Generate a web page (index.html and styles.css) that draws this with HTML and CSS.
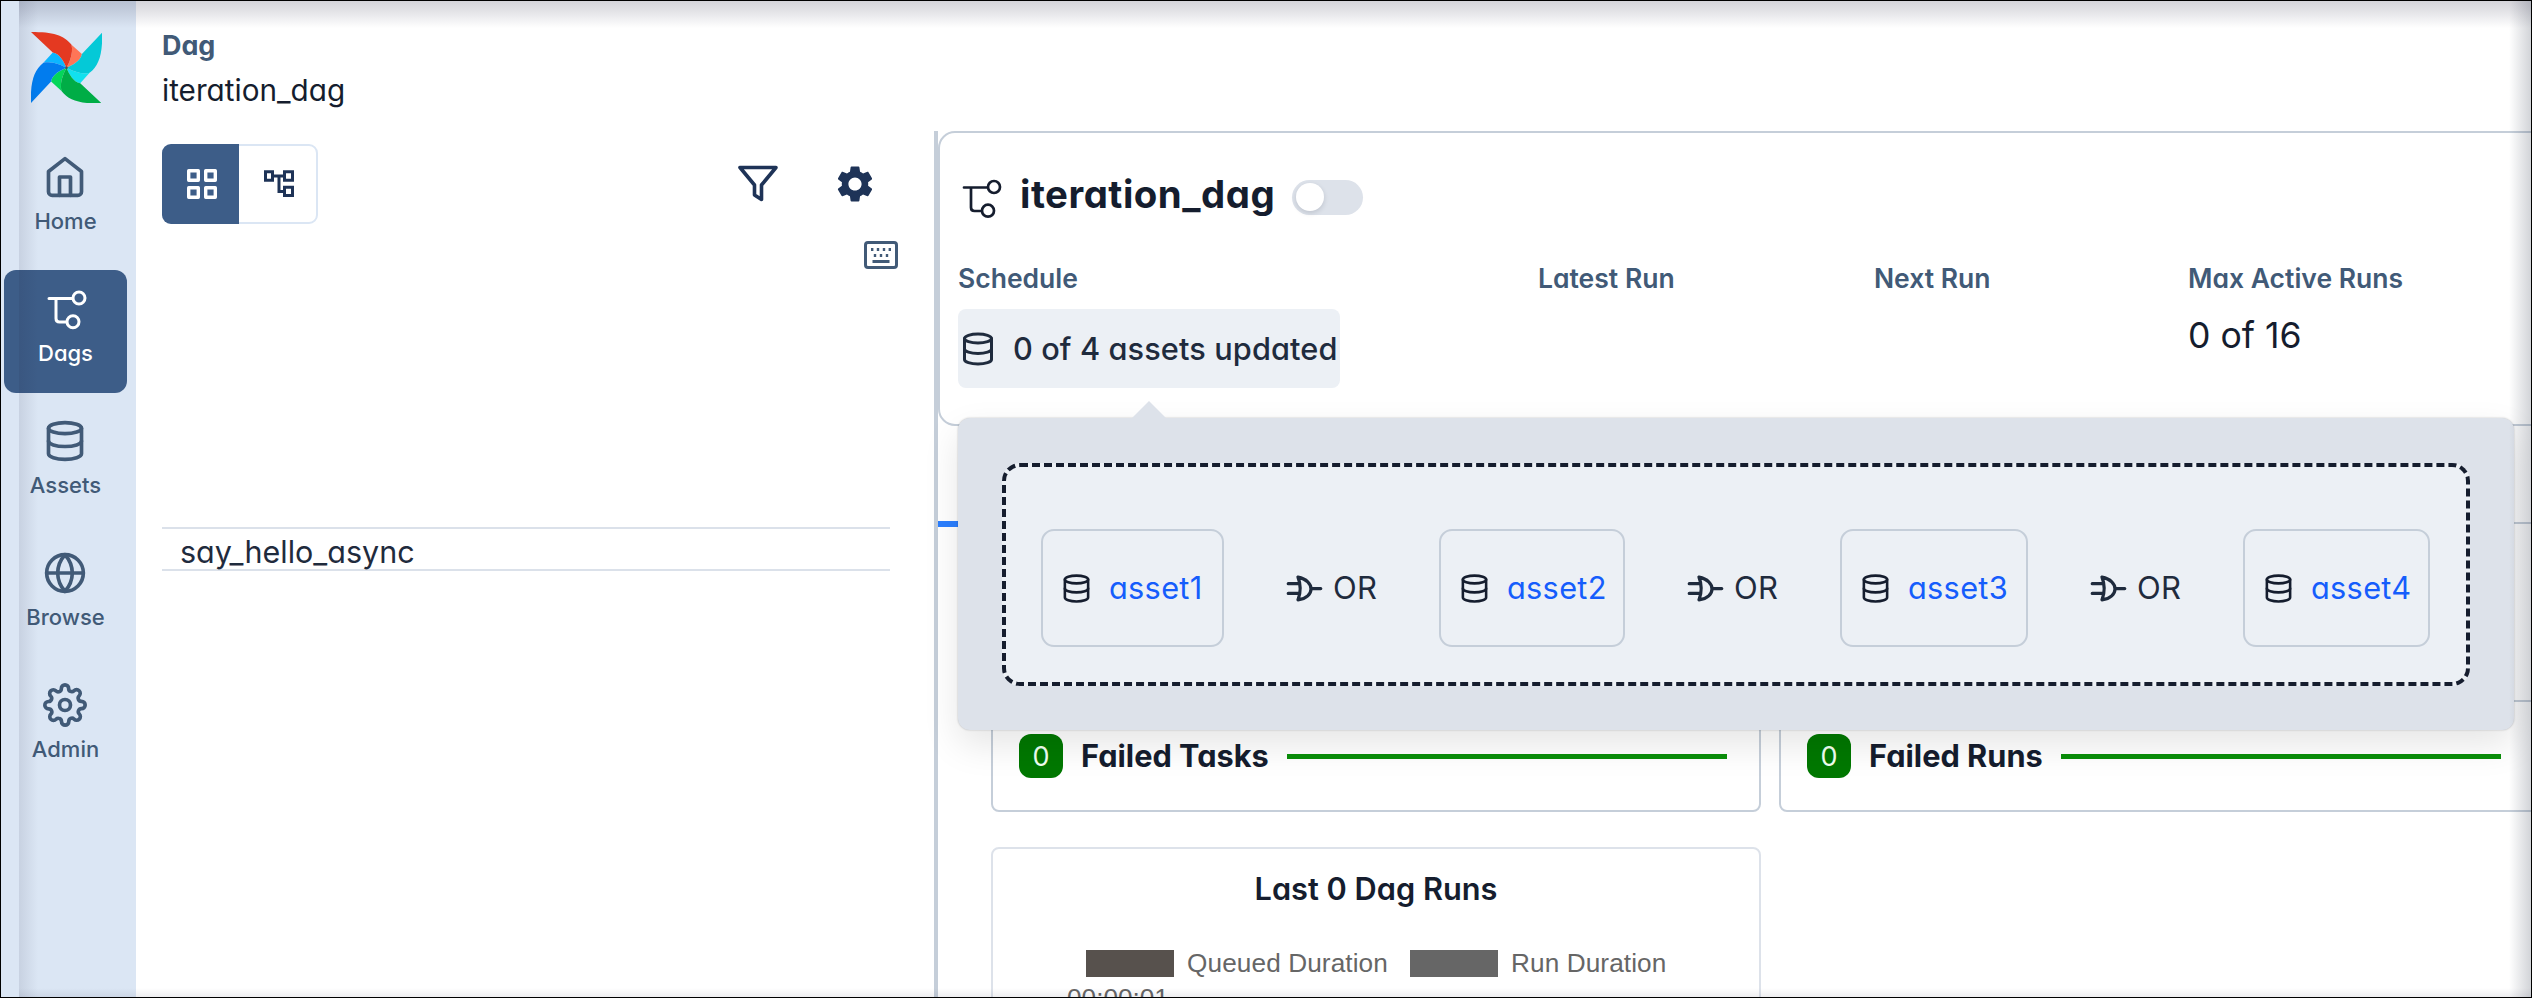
FILE: index.html
```html
<!DOCTYPE html>
<html lang="en">
<head>
<meta charset="utf-8">
<title>iteration_dag</title>
<link rel="stylesheet" href="styles.css">
</head>
<body>
<svg class="defs" width="0" height="0">
  <symbol id="db" viewBox="0 0 24 24"><ellipse cx="12" cy="5" rx="9" ry="3"/><path d="M21 12c0 1.66-4 3-9 3s-9-1.34-9-3"/><path d="M3 5v14c0 1.66 4 3 9 3s9-1.34 9-3V5"/></symbol>
  <symbol id="dag" viewBox="0 0 44 44"><path d="M5 11.500H28M12 11.500V31.500Q12 35 15.500 35H22"/><circle cx="35" cy="11" r="6"/><circle cx="29" cy="34.700" r="6"/></symbol>
  <symbol id="or" viewBox="0 0 24 24"><path d="M22 12h-6M2 9h7M2 15h7M8 5c10.667 2.100 10.667 12.600 0 14 1.806-4.667 1.806-9.333 0-14z"/></symbol>
</svg>
<div class="app">
  <nav class="sidebar">
    <svg class="logo" viewBox="-106 -107 212 212">
      <defs>
        <path id="petal" d="M-106-107C-40-107-8-98 15-69C21-42 8-15 0 0C-7-17-20-43-41-46Z"/>
        <path id="fold" d="M15-69L46-41C43-20 17-7 0 0C8-15 21-42 15-69Z"/>
      </defs>
      <use href="#fold" fill="#11e1ee" transform="rotate(90)"/><use href="#fold" fill="#04d659" transform="rotate(180)"/><use href="#fold" fill="#0cb6ff" transform="rotate(270)"/><use href="#fold" fill="#ff7557"/>
      <use href="#petal" fill="#e43921"/><use href="#petal" fill="#04c9d7" transform="rotate(90)"/><use href="#petal" fill="#00ad46" transform="rotate(180)"/><use href="#petal" fill="#017cee" transform="rotate(270)"/>
      <circle r="4" fill="#51504f"/>
    </svg>
    <a class="nav-item"><svg class="icon i44" viewBox="0 0 24 24"><path d="M3 9l9-7 9 7v11a2 2 0 0 1-2 2H5a2 2 0 0 1-2-2z"/><path d="M9 22V12h6v10"/></svg><span>Home</span></a>
    <a class="nav-item active"><svg class="icon i44 dag"><use href="#dag"/></svg><span>Dags</span></a>
    <a class="nav-item"><svg class="icon i44"><use href="#db"/></svg><span>Assets</span></a>
    <a class="nav-item"><svg class="icon i44" viewBox="0 0 24 24"><circle cx="12" cy="12" r="10"/><path d="M2 12h20M12 2a15.300 15.300 0 0 1 4 10 15.300 15.300 0 0 1-4 10 15.300 15.300 0 0 1-4-10 15.300 15.300 0 0 1 4-10z"/></svg><span>Browse</span></a>
    <a class="nav-item"><svg class="icon i44" viewBox="0 0 24 24"><circle cx="12" cy="12" r="3"/><path d="M19.400 15a1.650 1.650 0 0 0 .33 1.820l.06.06a2 2 0 0 1 0 2.830 2 2 0 0 1-2.830 0l-.06-.06a1.650 1.650 0 0 0-1.820-.33 1.650 1.650 0 0 0-1 1.510V21a2 2 0 0 1-2 2 2 2 0 0 1-2-2v-.09A1.650 1.650 0 0 0 9 19.400a1.650 1.650 0 0 0-1.820.33l-.06.06a2 2 0 0 1-2.830 0 2 2 0 0 1 0-2.830l.06-.06a1.650 1.650 0 0 0 .33-1.820 1.650 1.650 0 0 0-1.510-1H3a2 2 0 0 1-2-2 2 2 0 0 1 2-2h.09A1.650 1.650 0 0 0 4.600 9a1.650 1.650 0 0 0-.33-1.820l-.06-.06a2 2 0 0 1 0-2.830 2 2 0 0 1 2.830 0l.06.06a1.650 1.650 0 0 0 1.820.33H9a1.650 1.650 0 0 0 1-1.510V3a2 2 0 0 1 2-2 2 2 0 0 1 2 2v.09a1.650 1.650 0 0 0 1 1.510 1.650 1.650 0 0 0 1.820-.33l.06-.06a2 2 0 0 1 2.830 0 2 2 0 0 1 0 2.830l-.06.06a1.650 1.650 0 0 0-.33 1.820V9a1.650 1.650 0 0 0 1.510 1H21a2 2 0 0 1 2 2 2 2 0 0 1-2 2h-.09a1.650 1.650 0 0 0-1.510 1z"/></svg><span>Admin</span></a>
  </nav>

  <div class="main">
    <header class="crumbs">
      <div class="crumb-label">Dag</div>
      <div class="crumb-name">iteration_dag</div>
    </header>
    <div class="columns">
      <section class="grid-panel">
        <div class="toolbar">
          <div class="view-toggle">
            <button class="on"><svg width="30" height="30" viewBox="0 0 30 30" fill="none" stroke="#fff" stroke-width="3.400"><path d="M1.700 1.700H11.300V11.300H1.700ZM18.700 1.700H28.300V11.300H18.700ZM1.700 18.700H11.300V28.300H1.700ZM18.700 18.700H28.300V28.300H18.700Z" stroke-linejoin="round"/></svg></button>
            <button><svg width="30" height="28" viewBox="0 0 30 28" fill="none" stroke="#1e3357" stroke-width="3"><path d="M1.500 1.800H8.500V10.200H1.500ZM20.500 1.800H28.500V10.200H20.500ZM20.500 17.300H28.500V25.500H20.500ZM8.500 6H20.500M15 6V21.500H20.500"/></svg></button>
          </div>
          <svg class="filter" width="40" height="38" viewBox="0 0 40 38"><path d="M2 2.500H38L23.500 20V34.500L16.500 30V20Z"/></svg>
          <svg class="gear" width="44" height="44" viewBox="0 0 24 24"><path d="M19.140 12.940c.04-.3.06-.61.06-.94 0-.32-.02-.64-.07-.94l2.030-1.580c.18-.14.23-.41.12-.61l-1.920-3.320c-.12-.22-.37-.29-.59-.22l-2.390.96c-.5-.38-1.030-.7-1.620-.94l-.36-2.540c-.04-.24-.24-.41-.48-.41h-3.840c-.24 0-.43.17-.47.41l-.36 2.540c-.59.24-1.130.57-1.620.94l-2.390-.96c-.22-.08-.47 0-.59.22L2.740 8.870c-.12.21-.08.47.12.61l2.030 1.580c-.05.3-.09.63-.09.94s.02.64.07.94l-2.030 1.580c-.18.14-.23.41-.12.61l1.920 3.320c.12.22.37.29.59.22l2.390-.96c.5.38 1.030.7 1.620.94l.36 2.540c.05.24.24.41.48.41h3.840c.24 0 .44-.17.47-.41l.36-2.540c.59-.24 1.130-.56 1.620-.94l2.390.96c.22.08.47 0 .59-.22l1.920-3.320c.12-.22.07-.47-.12-.61l-2.010-1.580zM12 15.600c-1.980 0-3.600-1.620-3.600-3.600s1.620-3.600 3.600-3.600 3.600 1.620 3.600 3.600-1.620 3.600-3.600 3.600z"/></svg>
        </div>
        <svg class="keyboard" width="34" height="28" viewBox="0 0 34 28"><rect x="1.500" y="1.500" width="31" height="25" rx="2.500"/><path d="M7 8.500h2.400M12.800 8.500h2.400M18.800 8.500h2.400M24.600 8.500h2.400M9.800 14.500h2.400M15.800 14.500h2.400M21.800 14.500h2.400M8.500 20.500h17"/></svg>
        <div class="task-row">say_hello_async</div>
      </section>

      <section class="details">
        <div class="dag-card">
          <div class="title">
            <svg class="icon i44 dag"><use href="#dag"/></svg>
            <h1>iteration_dag</h1>
            <span class="switch"><i></i></span>
          </div>
          <div class="stats">
            <div class="stat s1"><b>Schedule</b>
              <button class="schedule"><svg class="icon i37"><use href="#db"/></svg><span>0 of 4 assets updated</span></button>
            </div>
            <div class="stat s2"><b>Latest Run</b></div>
            <div class="stat s3"><b>Next Run</b></div>
            <div class="stat s4"><b>Max Active Runs</b><span class="runs">0 of 16</span></div>
          </div>
        </div>
        <div class="tabs"><i></i></div>
        <div class="health">
          <div class="card"><span class="badge">0</span><span class="card-title">Failed Tasks</span><i class="bar"></i></div>
          <div class="card"><span class="badge">0</span><span class="card-title">Failed Runs</span><i class="bar"></i></div>
        </div>
        <div class="chart">
          <h2>Last 0 Dag Runs</h2>
          <div class="legend"><i class="queued"></i><span>Queued Duration</span><i class="run"></i><span>Run Duration</span></div>
          <div class="tick">00:00:01</div>
        </div>
      </section>
    </div>
  </div>

  <div class="popover">
    <div class="condition">
      <div class="asset w1"><svg class="icon i31"><use href="#db"/></svg><a>asset1</a></div>
      <div class="or"><svg class="icon i39"><use href="#or"/></svg><span>OR</span></div>
      <div class="asset w2"><svg class="icon i31"><use href="#db"/></svg><a>asset2</a></div>
      <div class="or"><svg class="icon i39"><use href="#or"/></svg><span>OR</span></div>
      <div class="asset w3"><svg class="icon i31"><use href="#db"/></svg><a>asset3</a></div>
      <div class="or"><svg class="icon i39"><use href="#or"/></svg><span>OR</span></div>
      <div class="asset w4"><svg class="icon i31"><use href="#db"/></svg><a>asset4</a></div>
    </div>
  </div>
  <div class="edge"></div>
  <div class="frame"></div>
</div>
</body>
</html>
```

FILE: styles.css
```css
* { box-sizing: border-box; }
body { margin: 0; background: #fff; }
.app {
  position: relative;
  display: flex;
  width: 2532px;
  height: 998px;
  overflow: hidden;
  font-family: Inter, sans-serif;
  font-feature-settings: "cv11";
  color: #151d2e;
  white-space: nowrap;
}
.defs { position: absolute; }
button { font: inherit; font-feature-settings: inherit; color: inherit; border: 0; padding: 0; background: none; }
i { font-style: normal; }
.icon { fill: none; stroke: currentColor; stroke-width: 2; stroke-linecap: round; stroke-linejoin: round; flex: none; display: block; }
.icon.dag { stroke-width: 2.7; }
.i44 { width: 44px; height: 44px; }
.i37 { width: 36px; height: 36px; }
.i31 { width: 31px; height: 31px; }
.i39 { width: 39px; height: 39px; }

/* Sidebar */
.sidebar {
  width: 136px;
  flex: none;
  background: #dbe6f4;
  padding: 32px 0 0 4px;
  display: flex;
  flex-direction: column;
  gap: 9px;
}
.logo { width: 71px; height: 71px; margin: 0 0 26px 26.500px; flex: none; }
.nav-item {
  width: 123px;
  height: 123px;
  flex: none;
  border-radius: 12px;
  padding-top: 17px;
  display: flex;
  flex-direction: column;
  align-items: center;
  gap: 8px;
  color: #415a77;
  font-size: 22px;
  line-height: 28px;
  font-weight: 500;
}
.nav-item .icon { margin-left: -1px; }
.nav-item .dag { margin-left: 0; stroke-width: 3; }
.nav-item.active { background: #3d5d88; color: #fff; }

/* Breadcrumb */
.main { flex: 1; min-width: 0; display: flex; flex-direction: column; }
.crumbs { height: 131px; flex: none; padding: 28px 0 0 26px; }
.crumb-label { font-size: 26.900px; line-height: 34px; font-weight: 700; color: #415a77; }
.crumb-name { font-size: 29.700px; line-height: 40px; margin-top: 8px; }
.columns { flex: 1; display: flex; min-height: 0; }

/* Grid panel */
.grid-panel { width: 798px; flex: none; padding: 13px 36px 0 26px; }
.toolbar { display: flex; align-items: center; height: 80px; }
.view-toggle { display: flex; width: 156px; height: 80px; border: 2px solid #dbe6f4; border-radius: 9px; }
.view-toggle button { flex: 1; display: flex; align-items: center; justify-content: center; }
.view-toggle .on { flex: none; width: 77px; margin: -2px 2px -2px -2px; padding-left: 2px; background: #3d5d88; border-radius: 9px 0 0 9px; }
.filter { margin-left: 420px; fill: none; stroke: #1e3357; stroke-width: 3.600; stroke-linejoin: round; }
.gear { margin-left: 55px; fill: #1e3357; }
.keyboard { display: block; margin: 17px 0 0 702px; fill: none; stroke: #415a77; stroke-width: 3; }
.task-row {
  margin-top: 258px;
  width: 728px;
  height: 44px;
  border: solid #dbe1ea;
  border-width: 2px 0;
  padding-left: 18px;
  font-size: 30.500px;
  line-height: 46px;
  color: #1f2b3d;
}

/* Details panel */
.details { flex: 1; min-width: 0; border-left: 4px solid #c5ced9; display: flex; flex-direction: column; }
.dag-card { width: 1640px; height: 295px; flex: none; border: 2px solid #c5ced9; border-radius: 17px; padding: 41px 0 0 18px; }
.title { display: flex; align-items: center; height: 44px; }
.title .icon { margin: 4px 0 0 1px; }
h1 { margin: -5px 0 0 17px; font-size: 38.400px; letter-spacing: .5px; line-height: 44px; font-weight: 700; width: 272px; }
.switch { width: 71px; height: 35px; border-radius: 18px; background: #dde2ea; margin-top: 3px; padding: 3px 4px; }
.switch i { display: block; width: 28px; height: 28px; border-radius: 50%; background: #fff; box-shadow: 0 2px 5px rgba(20, 30, 50, .15); }
.stats { display: flex; margin-top: 43px; }
.stat { display: flex; flex-direction: column; align-items: flex-start; }
.stat b { font-size: 26.500px; line-height: 34px; font-weight: 600; color: #415a77; }
.s1 { width: 580px; }
.s2 { width: 336px; }
.s3 { width: 314px; }
.schedule { margin-top: 14px; width: 382px; height: 79px; border-radius: 8px; background: #ecf0f5; display: flex; align-items: center; padding-left: 2px; color: #1f2b3d; }
.schedule span { margin-left: 17px; font-size: 30.720px; letter-spacing: .1px; font-weight: 500; }
.runs { font-size: 35.600px; line-height: 44px; margin-top: 19px; }
.tabs { height: 98px; flex: none; border-bottom: 2px solid #c5ced9; position: relative; }
.tabs i { position: absolute; left: 0; bottom: -5px; width: 140px; height: 6px; background: #2b7fff; }

/* Health cards */
.health { margin: 176px 0 0 53px; display: flex; gap: 18px; }
.card { width: 770px; height: 112px; flex: none; border: 2px solid #c5ced9; border-radius: 8px; display: flex; align-items: center; padding: 0 0 0 26px; }
.badge { width: 44px; height: 44px; border-radius: 12px; background: #007800; color: #effff0; font-size: 27px; line-height: 45px; text-align: center; }
.card-title { margin: -2px 18px 0; font-size: 30.720px; font-weight: 700; }
.bar { width: 440px; height: 5px; background: #0a8f0a; }
.chart { margin: 35px 0 0 53px; width: 770px; height: 400px; flex: none; border: 2px solid #dde2ea; border-radius: 8px; }
h2 { margin: 19px 0 0; text-align: center; font-size: 30.720px; line-height: 42px; font-weight: 600; }
.legend { display: flex; align-items: center; margin: 38px 0 0 93px; height: 30px; font: 26.200px "Liberation Sans", Arial, sans-serif; letter-spacing: .1px; color: #666; }
.legend i { width: 88px; height: 27px; margin-right: 13px; }
.legend .queued { background: #57514d; }
.legend .run { background: #666; margin-left: 22px; }
.tick { font: 26.200px/30px "Liberation Sans", Arial, sans-serif; color: #666; margin: 5px 0 0 74px; }

/* Asset condition popover */
.popover {
  position: absolute;
  left: 958px;
  top: 418px;
  width: 1556px;
  height: 312px;
  border-radius: 12px;
  background: #dde2ea;
  padding: 45px 44px;
  box-shadow: 0 15px 36px rgba(0, 0, 0, .1), 0 0 2px rgba(0, 0, 0, .25);
}
.popover::before {
  content: "";
  position: absolute;
  left: 173px;
  top: -17px;
  border: solid transparent;
  border-width: 0 18px 18px;
  border-bottom-color: #dde2ea;
}
.condition { height: 223px; border: 4px dashed #151d2e; border-radius: 18px; background: #ecf0f5; display: flex; padding: 62px 0 0 35px; }
.asset { height: 118px; border: 2px solid #c5ced9; border-radius: 13px; display: flex; align-items: center; padding-left: 18px; font-size: 30.720px; letter-spacing: .3px; }
.asset a { color: #155dfc; margin: -2px 0 0 17px; }
.w1 { width: 183px; }
.w2 { width: 186px; }
.w3 { width: 188px; }
.w4 { width: 187px; }
.or { width: 215px; height: 118px; display: flex; align-items: center; padding-left: 61px; gap: 9px; font-size: 31px; letter-spacing: .4px; color: #1f2b3d; }
.or span { margin-top: -2px; }

/* Window edge */
.edge {
  position: absolute;
  inset: 1px 1px 1px 19px;
  background:
    linear-gradient(rgba(30, 30, 60, .19), rgba(30, 30, 60, .13) 35%, rgba(30, 30, 60, 0)) 0 0 / 100% 27px no-repeat,
    linear-gradient(90deg, rgba(30, 30, 60, .1), rgba(30, 30, 60, 0)) 0 0 / 19px 100% no-repeat,
    linear-gradient(270deg, rgba(30, 40, 60, .2), rgba(30, 40, 60, 0)) 100% 0 / 22px 100% no-repeat,
    linear-gradient(0deg, rgba(30, 30, 60, .08), rgba(30, 30, 60, 0)) 0 100% / 100% 9px no-repeat;
}
.frame { position: absolute; inset: 0; border: 1px solid #000; }
```
